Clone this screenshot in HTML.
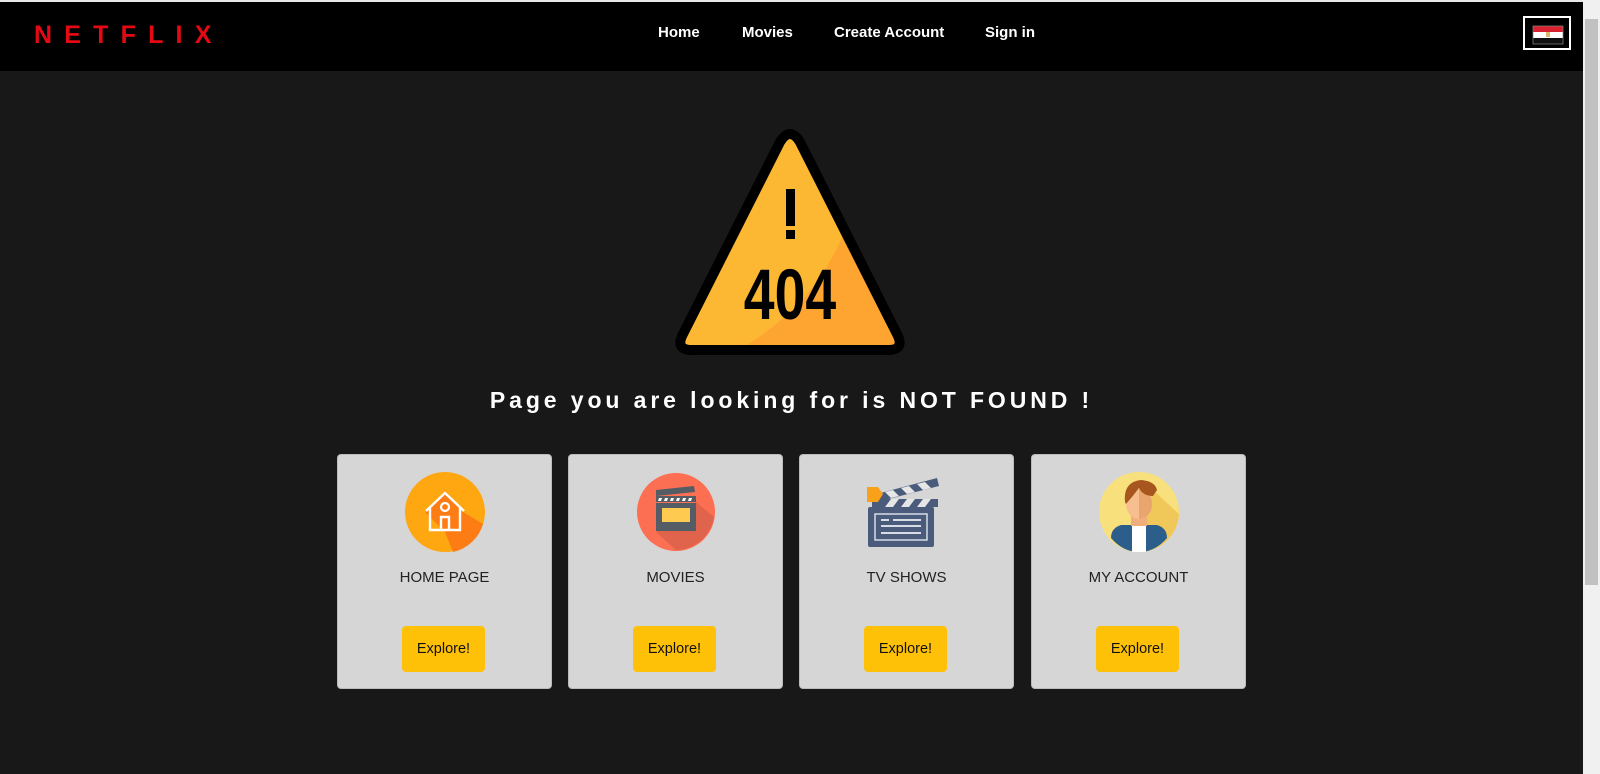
<!DOCTYPE html>
<html><head><meta charset="utf-8"><style>
*{margin:0;padding:0;box-sizing:border-box}
body{width:1600px;height:774px;background:#181818;font-family:"Liberation Sans",sans-serif;position:relative;overflow:hidden}
.top{position:absolute;left:0;top:0;width:1583px;height:2px;background:#e8e8e8}
nav{position:absolute;left:0;top:2px;width:1583px;height:69px;background:#000}
.logo{position:absolute;left:34px;top:19px;color:#e50914;font-size:25px;font-weight:bold;letter-spacing:12.2px}
.links a{position:absolute;top:22px;color:#fff;font-size:15px;font-weight:bold;text-decoration:none}
.flag{position:absolute;left:1523px;top:14px;width:48px;height:34px;border:2px solid #fff}
.sb{position:absolute;left:1583px;top:0;width:17px;height:774px;background:#f0f0f0}
.thumb{position:absolute;left:1585px;top:19px;width:13px;height:566px;background:#c1c1c1}
h1{position:absolute;left:0;width:1583px;top:387px;text-align:center;color:#fff;font-size:23px;font-weight:bold;letter-spacing:3.9px}
.card{position:absolute;top:454px;width:215px;height:235px;background:#d6d6d6;border-radius:4px;border:1px solid #bbb}
.card .ic{position:absolute;left:67px;top:17px;width:80px;height:80px}
.card .t{position:absolute;top:114px;width:100%;text-align:center;color:#222;font-size:15px}
.card .b{position:absolute;left:64px;top:171px;width:83px;height:46px;background:#ffc107;border-radius:4px;text-align:center;line-height:46px;font-size:14.5px;color:#111}
</style></head><body>
<div class="top"></div>
<nav>
<div class="logo">NETFLIX</div>
<div class="links"><a style="left:658px">Home</a><a style="left:742px">Movies</a><a style="left:834px">Create Account</a><a style="left:985px">Sign in</a></div>
<div class="flag"><svg width="44" height="30" style="position:absolute;left:0;top:0"><rect x="8" y="8" width="30" height="6" fill="#d82230"/><rect x="8" y="14" width="30" height="6" fill="#fff"/><rect x="21" y="14" width="4" height="5" fill="#d9b96b"/><rect x="8" y="20" width="30" height="6" fill="#111"/><rect x="8" y="8" width="30" height="18" fill="none" stroke="#888" stroke-width="0.7"/></svg></div>
</nav>
<div class="sb"></div><div class="thumb"></div>
<svg style="position:absolute;left:672px;top:128px" width="240" height="235" viewBox="0 0 240 235">
<defs><clipPath id="tc"><path d="M108 14 Q118 -2 128 14 L226 208 Q232 222 216 222 L20 222 Q4 222 10 208Z"/></clipPath></defs>
<path d="M108 14 Q118 -2 128 14 L226 208 Q232 222 216 222 L20 222 Q4 222 10 208Z" fill="#fdb833"/>
<g clip-path="url(#tc)"><path d="M63 224 Q150 175 178 88 L240 224Z" fill="#fea431"/></g>
<path d="M108 14 Q118 -2 128 14 L226 208 Q232 222 216 222 L20 222 Q4 222 10 208Z" fill="none" stroke="#000" stroke-width="10" stroke-linejoin="round"/>
<rect x="114" y="61" width="9" height="37" fill="#000"/><rect x="114" y="102" width="9" height="9" fill="#000"/>
<text transform="translate(118 191) scale(0.78 1)" text-anchor="middle" font-family="Liberation Sans,sans-serif" font-weight="bold" font-size="71" fill="#000">404</text>
</svg>
<h1>Page you are looking for is NOT FOUND !</h1>

<div class="card" style="left:337px">
<svg class="ic" viewBox="0 0 80 80"><circle cx="40" cy="40" r="40" fill="#fea711"/><path d="M20 40 L40 60 L48 80 A40 40 0 0 0 78 52 L58 40 L40 19Z" fill="#fe7c14"/><path d="M21 39 L40 21 L59 39 M25 36 V58 H55 V36 M36 58 V45 H44 V58" stroke="#fff" stroke-width="2.4" fill="none"/><circle cx="40" cy="35" r="4" stroke="#fff" stroke-width="2.2" fill="none"/></svg>
<div class="t">HOME PAGE</div><div class="b">Explore!</div></div>

<div class="card" style="left:568px">
<svg class="ic" viewBox="0 0 80 80"><circle cx="40" cy="40" r="39" fill="#fd6f53"/><path d="M20 60 L40 78 A39 39 0 0 0 78 45 L60 30Z" fill="#e0644c"/><rect x="20" y="31" width="40" height="28" fill="#545c66"/><rect x="26" y="36" width="28" height="14" fill="#fecb50"/><rect x="20" y="24" width="40" height="6" fill="#545c66"/><path d="M23 26 h3 l-1 3 h-3z M29 26 h3 l-1 3 h-3z M35 26 h3 l-1 3 h-3z M41 26 h3 l-1 3 h-3z M47 26 h3 l-1 3 h-3z M53 26 h3 l-1 3 h-3z" fill="#fff"/><path d="M20 18 L58 14 L59 20 L20 24Z" fill="#545c66"/></svg>
<div class="t">MOVIES</div><div class="b">Explore!</div></div>

<div class="card" style="left:799px">
<svg class="ic" viewBox="0 0 80 80"><path d="M6 23 L70 6 L72 14 L10 30Z" fill="#4a5b7c"/><path d="M18 20 L26 18 L32 24 L24 26Z M34 16 L42 14 L48 20 L40 22Z M50 12 L58 10 L64 16 L56 18Z" fill="#e6e6e6"/><rect x="5" y="27" width="66" height="8" fill="#4a5b7c"/><path d="M18 35 L24 27 H32 L26 35Z M34 35 L40 27 H48 L42 35Z M50 35 L56 27 H64 L58 35Z" fill="#e6e6e6"/><path d="M0 15 H11 L16 22 L11 30 H0Z" fill="#f9a11b"/><rect x="1" y="35" width="66" height="40" rx="2" fill="#4a5b7c"/><rect x="8" y="42" width="52" height="26" fill="none" stroke="#d8dde5" stroke-width="1.5"/><path d="M14 48 H22 M26 48 H54 M14 54 H54 M14 61 H54" stroke="#d8dde5" stroke-width="2"/></svg>
<div class="t">TV SHOWS</div><div class="b">Explore!</div></div>

<div class="card" style="left:1031px">
<svg class="ic" viewBox="0 0 80 80"><circle cx="40" cy="40" r="40" fill="#f8e07c"/><path d="M40 8 L56 20 L80 42 A40 40 0 0 1 40 80Z" fill="#f0c85a"/><path d="M12 66 Q12 56 22 53 H58 Q68 56 68 66 Q56 80 40 80 Q24 80 12 66Z" fill="#2c5e8c"/><rect x="33" y="53" width="14" height="27" fill="#fff"/><rect x="32" y="42" width="16" height="12" fill="#efae7c"/><ellipse cx="40" cy="32" rx="13" ry="15" fill="#f7bf8f"/><path d="M40 17 V47 Q53 45 53 32 Q53 20 40 17Z" fill="#e9a56e"/><path d="M26 30 Q24 10 42 8 Q56 9 58 18 L54 24 Q44 24 40 16 Q34 24 27 32Z" fill="#a7561e"/></svg>
<div class="t">MY ACCOUNT</div><div class="b">Explore!</div></div>
</body></html>
